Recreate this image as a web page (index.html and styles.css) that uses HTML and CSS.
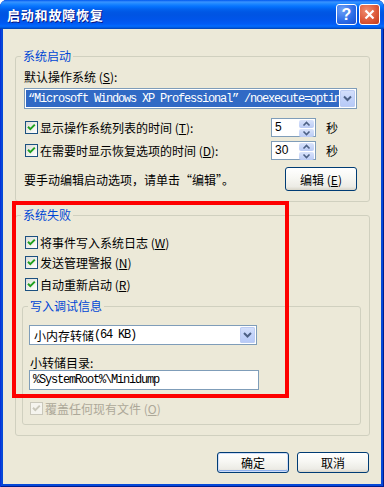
FILE: index.html
```html
<!DOCTYPE html>
<html lang="zh-CN">
<head>
<meta charset="utf-8">
<title>启动和故障恢复</title>
<link rel="stylesheet" href="styles.css">
</head>
<body>
<div class="window">
  <div class="titlebar">
    <span class="title">启动和故障恢复</span>
    <div class="tb-buttons">
      <span class="tb-btn help">?</span>
      <span class="tb-btn close"><svg width="13" height="13" viewBox="0 0 13 13"><path d="M2.5 2.5 L10.5 10.5 M10.5 2.5 L2.5 10.5" stroke="#fff" stroke-width="2.2" fill="none"/></svg></span>
    </div>
  </div>
  <div class="client">
    <fieldset class="group g1">
      <legend>系统启动</legend>
      <div class="lbl">默认操作系统 (<u>S</u>):</div>
      <div class="combo combo1">
        <div class="combo-text sel mono">“Microsoft Windows XP Professional” /noexecute=optin</div>
        <span class="combo-btn"><svg width="15" height="17" viewBox="0 0 15 17"><path d="M4 6.5 L7.5 10 L11 6.5" stroke="#4D6185" stroke-width="2" fill="none"/></svg></span>
      </div>
      <div class="row r1">
        <div class="check"><span class="cb"><svg width="11" height="11" viewBox="0 0 11 11"><path d="M2 4.8 L4.3 7.1 L8.8 2.6" stroke="#21A121" stroke-width="2" fill="none"/></svg></span>显示操作系统列表的时间 (<u>T</u>):</div>
        <div class="spinwrap">
          <div class="spin"><span class="val">5</span><span class="spin-btns"><span class="sb"><svg width="13" height="8" viewBox="0 0 13 8"><path d="M3.5 5.5 L6.5 2.5 L9.5 5.5" stroke="#4D6185" stroke-width="1.6" fill="none"/></svg></span><span class="sb"><svg width="13" height="8" viewBox="0 0 13 8"><path d="M3.5 2.5 L6.5 5.5 L9.5 2.5" stroke="#4D6185" stroke-width="1.6" fill="none"/></svg></span></span></div>
          <span class="unit">秒</span>
        </div>
      </div>
      <div class="row r2">
        <div class="check"><span class="cb"><svg width="11" height="11" viewBox="0 0 11 11"><path d="M2 4.8 L4.3 7.1 L8.8 2.6" stroke="#21A121" stroke-width="2" fill="none"/></svg></span>在需要时显示恢复选项的时间 (<u>D</u>):</div>
        <div class="spinwrap">
          <div class="spin"><span class="val">30</span><span class="spin-btns"><span class="sb"><svg width="13" height="8" viewBox="0 0 13 8"><path d="M3.5 5.5 L6.5 2.5 L9.5 5.5" stroke="#4D6185" stroke-width="1.6" fill="none"/></svg></span><span class="sb"><svg width="13" height="8" viewBox="0 0 13 8"><path d="M3.5 2.5 L6.5 5.5 L9.5 2.5" stroke="#4D6185" stroke-width="1.6" fill="none"/></svg></span></span></div>
          <span class="unit">秒</span>
        </div>
      </div>
      <div class="row r3">
        <span class="hint">要手动编辑启动选项，请单击“编辑”。</span>
        <span class="btn edit">编辑 (<u>E</u>)</span>
      </div>
    </fieldset>

    <fieldset class="group g2">
      <legend>系统失败</legend>
      <div class="check crow cw"><span class="cb"><svg width="11" height="11" viewBox="0 0 11 11"><path d="M2 4.8 L4.3 7.1 L8.8 2.6" stroke="#21A121" stroke-width="2" fill="none"/></svg></span>将事件写入系统日志 (<u>W</u>)</div>
      <div class="check crow cn"><span class="cb"><svg width="11" height="11" viewBox="0 0 11 11"><path d="M2 4.8 L4.3 7.1 L8.8 2.6" stroke="#21A121" stroke-width="2" fill="none"/></svg></span>发送管理警报 (<u>N</u>)</div>
      <div class="check crow cr"><span class="cb"><svg width="11" height="11" viewBox="0 0 11 11"><path d="M2 4.8 L4.3 7.1 L8.8 2.6" stroke="#21A121" stroke-width="2" fill="none"/></svg></span>自动重新启动 (<u>R</u>)</div>

      <fieldset class="group inner">
        <legend>写入调试信息</legend>
        <div class="combo combo2">
          <div class="combo-text">小内存转储<span class="mono">(64 KB)</span></div>
          <span class="combo-btn"><svg width="15" height="16" viewBox="0 0 15 16"><path d="M4 6 L7.5 9.5 L11 6" stroke="#4D6185" stroke-width="2" fill="none"/></svg></span>
        </div>
        <div class="lbl2">小转储目录:</div>
        <div class="textbox mono">%SystemRoot%\Minidump</div>
        <div class="check crow co disabled"><span class="cb"><svg width="11" height="11" viewBox="0 0 11 11"><path d="M2 4.8 L4.3 7.1 L8.8 2.6" stroke="#CAC8BB" stroke-width="2" fill="none"/></svg></span>覆盖任何现有文件 (<u>O</u>)</div>
      </fieldset>
    </fieldset>

    <div class="actions">
      <span class="btn default">确定</span>
      <span class="btn">取消</span>
    </div>
  </div>
  <div class="annot"></div>
</div>
</body>
</html>
```

FILE: styles.css
```css
* { box-sizing: border-box; }
html, body { margin: 0; padding: 0; background: #fff; }
body {
  font-family: "Noto Sans CJK SC", "Noto Sans", sans-serif;
  font-size: 12px;
  color: #000;
}
u { text-decoration: underline; text-underline-offset: 1px; }

.window {
  position: relative;
  width: 384px;
  height: 487px;
  display: flex;
  flex-direction: column;
  background: #0648D8;
  box-shadow: inset 1px 0 #0831D9, inset -1px 0 #001C8C, inset 0 -1px #001C8C;
  border-radius: 7px 7px 0 0;
  overflow: hidden;
}

.titlebar {
  flex: none;
  height: 29px;
  display: flex;
  align-items: center;
  justify-content: space-between;
  padding: 0 4px 0 7px;
  background: linear-gradient(to bottom,
    #0058EE 0px, #3A93FF 2px, #288EFF 3px, #127DFF 5px, #036FFC 7px,
    #0262EE 9px, #0057E5 12px, #0054E3 15px, #0055EB 20px, #005BF5 24px,
    #026AFE 26px, #0062EF 27px, #0052D6 28px, #0040AB 29px);
}
.title {
  color: #fff;
  font-weight: bold;
  font-size: 13px;
  letter-spacing: 0.8px;
  text-shadow: 1px 1px #0A1883;
  line-height: 16px;
}
.tb-buttons { display: flex; gap: 2px; }
.tb-btn {
  width: 21px;
  height: 21px;
  border: 1px solid #fff;
  border-radius: 3px;
  display: flex;
  align-items: center;
  justify-content: center;
  color: #fff;
}
.help {
  background: radial-gradient(circle at 30% 25%, #6FA2F7 0%, #2A6AE6 60%, #1D4FCB 100%);
  font-family: "Liberation Sans", sans-serif;
  font-weight: bold;
  font-size: 16px;
  line-height: 1;
}
.close {
  background: radial-gradient(circle at 35% 30%, #F08E70 0%, #DD5A3A 55%, #C13B1B 100%);
}

.client {
  flex: 1;
  margin: 0 3px 3px 3px;
  background: #ECE9D8;
  padding: 20px 11px 0 12px;
  display: flex;
  flex-direction: column;
}

.group {
  border: 1px solid #D0D0BF;
  border-radius: 3px;
  margin: 0;
  padding: 0 12px 10px 8px;
  min-width: 0;
}
.group > legend {
  color: #0046D5;
  padding: 0 2px;
  margin-left: -3px;
  height: 14px;
  line-height: 14px;
}

.lbl { margin-top: 7px; height: 14px; line-height: 14px; }

.combo {
  display: flex;
  align-items: stretch;
  background: #fff;
  border: 1px solid #7F9DB9;
  padding: 1px;
}
.combo1 { margin-top: 4px; height: 21px; }
.combo-text {
  flex: 1;
  min-width: 0;
  overflow: hidden;
  white-space: nowrap;
  display: flex;
  align-items: center;
  padding-left: 2px;
}
.combo-text.sel {
  background: #316AC5;
  color: #fff;
  margin-right: 1px;
}
.mono {
  font-family: "Liberation Mono", monospace;
  font-size: 12px;
  letter-spacing: -1.2px;
}
.combo-btn {
  flex: none;
  width: 15px;
  border-radius: 2px;
  background: linear-gradient(to bottom, #D6E1FB 0%, #C3D3FA 50%, #B6C9F6 100%);
  box-shadow: inset 0 0 0 1px #BCCCF3;
  display: flex;
  align-items: center;
  justify-content: center;
}

.row { display: flex; align-items: center; justify-content: space-between; }
.r1 { margin-top: 9px; height: 19px; }
.r2 { margin-top: 4px; height: 19px; }
.r3 { margin-top: 7px; height: 24px; }

.check { display: flex; align-items: center; white-space: nowrap; }
.cb {
  flex: none;
  width: 13px;
  height: 13px;
  margin: 0 2px 0 1px;
  border: 1px solid #1C5180;
  background: linear-gradient(135deg, #DCDCD7 0%, #F2F2EE 60%, #FFFFFF 100%);
  display: flex;
}
.disabled { color: #ACA899; }
.disabled .cb { border-color: #CAC8BB; background: #F5F4EE; }

.spinwrap { width: 86px; display: flex; align-items: center; }
.spin {
  width: 45px;
  height: 19px;
  border: 1px solid #7F9DB9;
  background: #fff;
  display: flex;
  padding: 1px;
}
.val {
  flex: 1;
  font-family: "Liberation Sans", sans-serif;
  font-size: 12px;
  line-height: 15px;
  padding-left: 2px;
}
.spin-btns { width: 15px; display: flex; flex-direction: column; gap: 1px; }
.sb {
  flex: 1;
  border-radius: 2px;
  background: linear-gradient(to bottom, #D9E3FB, #BACBF5);
  display: flex;
  align-items: center;
  justify-content: center;
}
.unit { margin-left: 10px; }

.btn {
  height: 24px;
  width: 72px;
  border: 1px solid #003C74;
  border-radius: 3px;
  background: linear-gradient(to bottom, #FFFFFF 0%, #F7F7F3 45%, #ECEBE5 85%, #D8D5C9 100%);
  display: flex;
  align-items: center;
  justify-content: center;
  white-space: nowrap;
}
.btn.default {
  box-shadow: inset 0 0 0 1px #CEDCF8, inset 0 -1px 0 1px #8EB0EC;
}

.g2 { margin-top: 6px; }
.crow { height: 18px; }
.cw { margin-top: 11px; }
.cn { margin-top: 2px; }
.cr { margin-top: 4px; }

.inner {
  margin: 6px -4px 0 -2px;
  padding: 0 8px 7px 6px;
}
.inner > legend { margin-left: -1px; }
.combo2 { margin-top: 12px; height: 20px; width: 228px; }
.combo2 .combo-text { padding-left: 3px; }
.lbl2 { margin-top: 11px; height: 14px; line-height: 14px; padding-left: 1px; }
.textbox {
  height: 20px;
  width: 230px;
  border: 1px solid #7F9DB9;
  background: #fff;
  display: flex;
  align-items: center;
  padding-left: 3px;
}
.co { margin-top: 9px; }

.actions {
  margin-top: 16px;
  display: flex;
  justify-content: flex-end;
  gap: 8px;
  padding-right: 1px;
}
.actions .btn { height: 21px; }

.annot {
  position: absolute;
  left: 12px;
  top: 201px;
  width: 277px;
  height: 197px;
  border: 4px solid #FE0000;
  pointer-events: none;
}
```
